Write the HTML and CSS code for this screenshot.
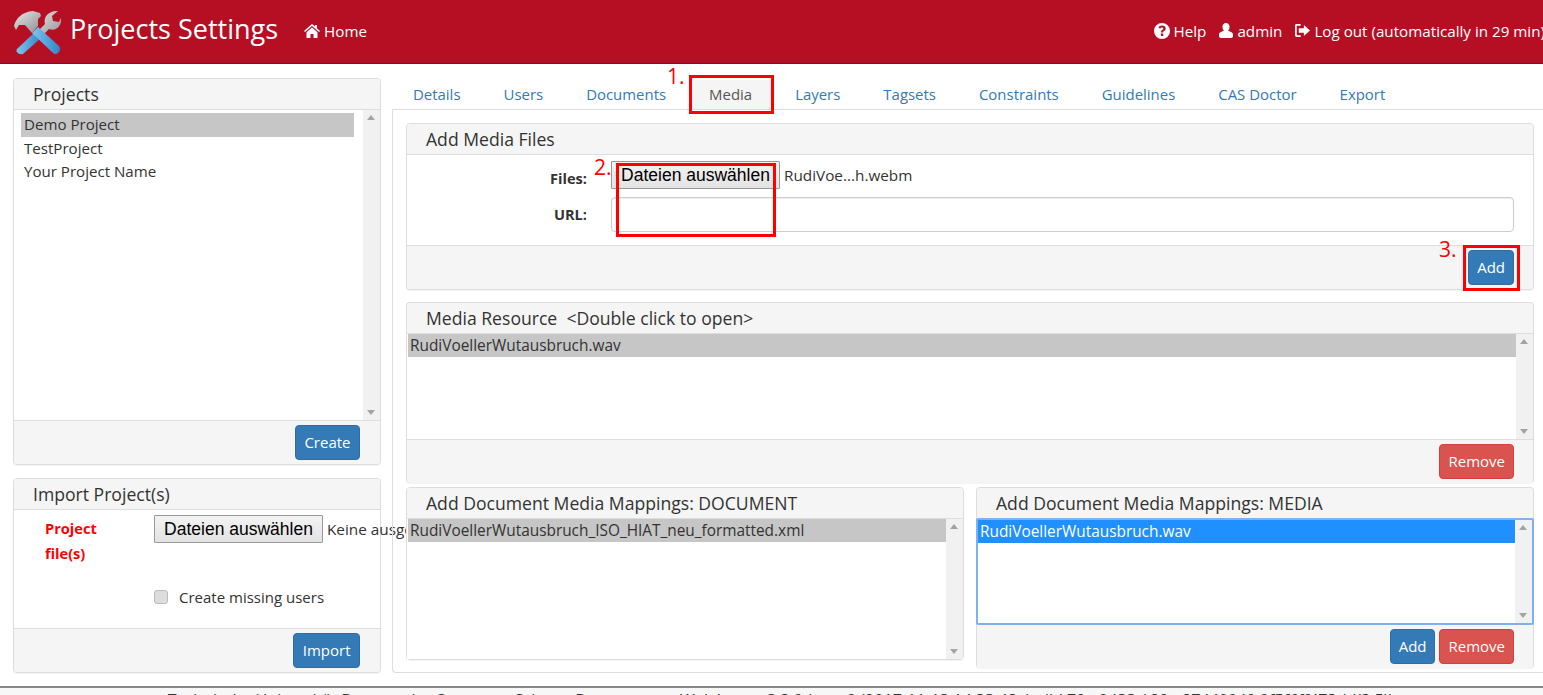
FILE: index.html
```html
<!DOCTYPE html>
<html lang="en">

<head>
    <meta charset="UTF-8">
    <meta name="viewport" content="width=device-width, initial-scale=1.0">
    <title>Projects Settings</title>
    <link rel="stylesheet" href="styles.css">
</head>

<body>
    <header class="topbar">
        <svg class="logo" viewBox="0 0 48 46" width="48" height="46">
            <defs>
                <linearGradient id="steel" x1="0" y1="0" x2="1" y2="1">
                    <stop offset="0" stop-color="#e8e8e8" />
                    <stop offset="1" stop-color="#8d8d8d" />
                </linearGradient>
                <linearGradient id="grip" x1="0" y1="0" x2="1" y2="0">
                    <stop offset="0" stop-color="#7fc4ee" />
                    <stop offset="1" stop-color="#2f86c9" />
                </linearGradient>
            </defs>
            <!-- wrench -->
            <path d="M19 27 L31 15 C29 8 35 1 44 2 L38 7 L39 12 L45 13 L47 9 C48 17 42 23 35 20 L23 32 Z" fill="url(#steel)" />
            <path d="M3 40 L21 23 L27 29 L9 45 C5 46 1 43 3 40 Z" fill="url(#grip)" />
            <!-- hammer -->
            <path d="M0 17 C2 9 8 3 19 2 L26 4 L27 7 L24 10 L24 17 L18 24 L11 16 L5 16 L2 21 Z" fill="url(#steel)" />
            <path d="M18 24 L24 18 L45 37 C47 40 46 42 44 44 C42 46 40 45 38 43 Z" fill="url(#grip)" />
        </svg>
        <span class="app-title">Projects Settings</span>
        <a class="nav-link home-link" href="#">
            <svg class="nav-icon" viewBox="0 0 16 14" width="16" height="14"><path d="M8 0 L11 2.6 V1 H13 V4.4 L16 7 L15 8 L8 2 L1 8 L0 7 Z M2.5 8.2 L8 3.5 L13.5 8.2 V14 H9.5 V10 H6.5 V14 H2.5 Z" fill="#fff" /></svg>
            Home
        </a>
        <nav class="user-nav">
            <a class="nav-link" href="#">
                <svg class="nav-icon" viewBox="0 0 16 16" width="16" height="16"><path fill-rule="evenodd" d="M8 0 A8 8 0 1 0 8 16 A8 8 0 1 0 8 0 Z M8 2.5 C10.4 2.5 11.7 3.8 11.7 5.5 C11.7 7 10.8 7.6 10 8.1 C9.4 8.5 9.2 8.8 9.2 9.6 H6.9 C6.9 8.2 7.3 7.5 8.2 6.9 C8.9 6.4 9.3 6.2 9.3 5.6 C9.3 5 8.8 4.6 8 4.6 C7.2 4.6 6.6 5 6.2 5.8 L4.4 4.6 C5.1 3.3 6.3 2.5 8 2.5 Z M6.9 10.6 H9.3 V13 H6.9 Z" fill="#fff" /></svg>
                Help
            </a>
            <a class="nav-link" href="#">
                <svg class="nav-icon" viewBox="0 0 15 16" width="14" height="15"><path d="M7.5 0 C10 0 11.3 2 11.3 4.2 C11.3 6 10.5 7.6 9.6 8.4 C11.5 9.2 15 10 15 12 V14.5 C15 15.5 14 16 13 16 H2 C1 16 0 15.5 0 14.5 V12 C0 10 3.5 9.2 5.4 8.4 C4.5 7.6 3.7 6 3.7 4.2 C3.7 2 5 0 7.5 0 Z" fill="#fff" /></svg>
                admin
            </a>
            <a class="nav-link" href="#">
                <svg class="nav-icon" viewBox="0 0 16 14" width="15" height="13"><path d="M1.5 0 H6 V1.8 H2.4 C2 1.8 1.8 2 1.8 2.4 V11.6 C1.8 12 2 12.2 2.4 12.2 H6 V14 H1.5 C0.6 14 0 13.4 0 12.5 V1.5 C0 0.6 0.6 0 1.5 0 Z M9.5 1 L16 7 L9.5 13 V9.5 H4 V4.5 H9.5 Z" fill="#fff" /></svg>
                Log out (automatically in 29 min)
            </a>
        </nav>
    </header>

    <main class="page">
        <aside class="side-col">
            <section class="panel">
                <div class="panel-heading">Projects</div>
                <div class="listbox listbox-projects">
                    <ul class="list-items">
                        <li class="selected">Demo Project</li>
                        <li>TestProject</li>
                        <li>Your Project Name</li>
                    </ul>
                    <div class="scrollbar"><span class="arrow-up"></span><span class="arrow-down"></span></div>
                </div>
                <div class="panel-footer"><button class="btn btn-primary">Create</button></div>
            </section>

            <section class="panel">
                <div class="panel-heading">Import Project(s)</div>
                <div class="import-body">
                    <label class="required-label">Project file(s)</label>
                    <div class="import-fields">
                        <div class="file-row">
                            <button class="file-btn">Dateien auswählen</button>
                            <span class="file-name file-name-clipped">Keine ausgewählt</span>
                        </div>
                        <label class="check-row"><span class="checkbox"></span>Create missing users</label>
                    </div>
                </div>
                <div class="panel-footer"><button class="btn btn-primary">Import</button></div>
            </section>
        </aside>

        <div class="content-col">
            <ul class="tabs">
                <li><a href="#">Details</a></li>
                <li><a href="#">Users</a></li>
                <li><a href="#">Documents</a></li>
                <li class="active"><a href="#">Media</a></li>
                <li><a href="#">Layers</a></li>
                <li><a href="#">Tagsets</a></li>
                <li><a href="#">Constraints</a></li>
                <li><a href="#">Guidelines</a></li>
                <li><a href="#">CAS Doctor</a></li>
                <li><a href="#">Export</a></li>
            </ul>

            <div class="tab-box">
                <section class="panel">
                    <div class="panel-heading">Add Media Files</div>
                    <div class="media-form">
                        <label class="form-label form-label-low">Files:</label>
                        <div class="file-row">
                            <button class="file-btn">Dateien auswählen</button>
                            <span class="file-name">RudiVoe...h.webm</span>
                        </div>
                        <label class="form-label">URL:</label>
                        <input class="text-input" type="text">
                    </div>
                    <div class="panel-footer"><button class="btn btn-primary">Add</button></div>
                </section>

                <section class="panel panel-open">
                    <div class="panel-heading">Media Resource &nbsp;&lt;Double click to open&gt;</div>
                    <div class="listbox listbox-media">
                        <ul class="list-items list-flush">
                            <li class="selected">RudiVoellerWutausbruch.wav</li>
                        </ul>
                        <div class="scrollbar"><span class="arrow-up"></span><span class="arrow-down"></span></div>
                    </div>
                    <div class="panel-footer"><button class="btn btn-danger">Remove</button></div>
                </section>

                <div class="mapping-row">
                    <section class="panel mapping-doc">
                        <div class="panel-heading">Add Document Media Mappings: DOCUMENT</div>
                        <div class="listbox listbox-doc">
                            <ul class="list-items list-flush">
                                <li class="selected">RudiVoellerWutausbruch_ISO_HIAT_neu_formatted.xml</li>
                            </ul>
                            <div class="scrollbar"><span class="arrow-up"></span><span class="arrow-down"></span></div>
                        </div>
                    </section>
                    <section class="panel panel-open mapping-media">
                        <div class="panel-heading">Add Document Media Mappings: MEDIA</div>
                        <div class="listbox listbox-focus">
                            <ul class="list-items list-flush">
                                <li class="selected-active">RudiVoellerWutausbruch.wav</li>
                            </ul>
                            <div class="scrollbar"><span class="arrow-up"></span><span class="arrow-down"></span></div>
                        </div>
                        <div class="panel-footer">
                            <button class="btn btn-primary">Add</button>
                            <button class="btn btn-danger">Remove</button>
                        </div>
                    </section>
                </div>
            </div>
        </div>
    </main>

    <footer class="site-footer">Technische Universität Darmstadt - Computer Science Department - WebAnno - 3.3.0-beta-2 (2017-11-13 14:33:48, build 79 - 2433 / 89 - 87440049 9f5f6ff473dd(3.5))</footer>

    <!-- red marks drawn on top of the screenshot -->
    <div class="mark mark-media"></div>
    <div class="mark mark-file"></div>
    <div class="mark mark-add"></div>
    <span class="mark-num num-1">1.</span>
    <span class="mark-num num-2">2.</span>
    <span class="mark-num num-3">3.</span>
</body>

</html>
```

FILE: styles.css
```css
/* Global styles */

html,
body {
    height: 695px;
    overflow: hidden;
}

body {
    margin: 0;
    position: relative;
    font-family: "Open Sans", Arial, sans-serif;
    font-size: 15px;
    color: #333;
    background-color: #fff;
}

ul {
    margin: 0;
    padding: 0;
    list-style: none;
}

a {
    text-decoration: none;
}
/* Top bar */

.topbar {
    display: flex;
    align-items: center;
    height: 63px;
    padding-left: 14px;
    background-color: #b60f24;
    border-bottom: 1px solid #333;
    color: #fff;
    white-space: nowrap;
    overflow: hidden;
}

.logo {
    flex: none;
    margin-right: 8px;
}

.app-title {
    font-size: 27px;
    padding-bottom: 7px;
}

.nav-link {
    display: inline-flex;
    align-items: center;
    gap: 4px;
    color: #fff;
    font-size: 15.2px;
    padding-bottom: 2px;
}

.home-link {
    margin-left: 26px;
}

.user-nav {
    display: flex;
    gap: 13px;
    margin-left: auto;
    margin-right: -2px;
}

.nav-icon {
    flex: none;
}
/* Page columns */

.page {
    display: flex;
    height: 622px;
}

.side-col {
    display: flex;
    flex-direction: column;
    gap: 13px;
    flex: none;
    width: 368px;
    margin: 14px 11px 0 13px;
}

.side-col .panel-footer {
    padding-right: 20px;
}

.side-col .btn {
    padding: 0 8.5px 2px;
}

.content-col {
    flex: 1;
    min-width: 0;
    padding-top: 16px;
}
/* Panels */

.panel {
    background-color: #fff;
    border: 1px solid #ddd;
    border-radius: 4px;
    box-shadow: 0 1px 1px rgba(0, 0, 0, .05);
}

.panel-open {
    border-bottom: none;
    background-color: #f5f5f5;
}

.panel-heading {
    height: 30px;
    line-height: 30px;
    padding-left: 19px;
    font-size: 17.6px;
    background-color: #f5f5f5;
    border-bottom: 1px solid #ddd;
    border-radius: 3px 3px 0 0;
}

.panel-footer {
    display: flex;
    justify-content: flex-end;
    gap: 4px;
    padding: 4px 19px 4px 0;
    background-color: #f5f5f5;
    border-top: 1px solid #ddd;
    border-radius: 0 0 3px 3px;
}
/* Buttons */

.btn {
    height: 35px;
    padding: 0 8px 2px;
    font-family: inherit;
    font-size: 15px;
    color: #fff;
    border: 1px solid transparent;
    border-radius: 4px;
}

.btn-primary {
    background-color: #337ab7;
    border-color: #2e6da4;
}

.btn-danger {
    background-color: #d9534f;
    border-color: #d43f3a;
}

.file-btn {
    flex: none;
    width: 169px;
    height: 28px;
    padding: 0;
    font-family: "Liberation Sans", Arial, sans-serif;
    font-size: 17.5px;
    color: #000;
    background: linear-gradient(#f3f3f3, #e3e3e3);
    border: 1px solid #999;
    border-radius: 1px;
}

.file-row {
    display: flex;
    align-items: center;
    gap: 4px;
}

.file-name {
    font-size: 15.3px;
    white-space: nowrap;
}

.file-name-clipped {
    width: 79px;
    overflow: hidden;
}
/* List boxes */

.listbox {
    display: flex;
    background-color: #fff;
}

.listbox-projects {
    height: 310px;
}

.listbox-media {
    height: 105px;
}

.listbox-doc {
    height: 140px;
}

.listbox-focus {
    height: 103px;
    margin: 0 -1px;
    border: 2px solid #7fb0f0;
    border-radius: 2px;
}

.list-items {
    flex: 1;
    min-width: 0;
    padding: 3px 9px 0 7px;
    font-size: 15.1px;
    line-height: 23.5px;
}

.list-items li {
    padding-left: 3px;
    white-space: nowrap;
}

.list-flush {
    padding: 0 0 0 1px;
    font-size: 15.4px;
    line-height: 23px;
}

.listbox-focus .list-flush {
    padding-left: 0;
}

.list-flush li {
    padding-left: 2px;
}

.selected {
    background-color: #c6c6c6;
}

.selected-active {
    background-color: #1e90ff;
    color: #fff;
}

.scrollbar {
    position: relative;
    flex: none;
    width: 17px;
    background-color: #f1f1f1;
}

.arrow-up,
.arrow-down {
    position: absolute;
    left: 4px;
    border-left: 4px solid transparent;
    border-right: 4px solid transparent;
}

.arrow-up {
    top: 5px;
    border-bottom: 5px solid #a3a3a3;
}

.arrow-down {
    bottom: 5px;
    border-top: 5px solid #a3a3a3;
}
/* Import form */

.import-body {
    display: flex;
    height: 118px;
    padding-left: 31px;
}

.required-label {
    flex: none;
    box-sizing: border-box;
    width: 109px;
    padding-right: 40px;
    margin-top: 6px;
    font-weight: bold;
    font-size: 14.6px;
    line-height: 25px;
    color: #f00;
}

.import-fields {
    padding-top: 5px;
}

.check-row {
    display: flex;
    align-items: center;
    gap: 11px;
    margin-top: 44px;
}

.checkbox {
    width: 12px;
    height: 12px;
    background-color: #ddd;
    border: 1px solid #bbb;
    border-radius: 3px;
}
/* Tabs */

.tabs {
    display: flex;
    height: 29px;
    padding-left: 1px;
    font-size: 14.95px;
    border-bottom: 1px solid #ddd;
}

.tabs li {
    margin-right: 3px;
}

.tabs a {
    display: block;
    height: 29px;
    line-height: 29px;
    padding: 0 20px;
    color: #337ab7;
}

.tabs .active a {
    color: #555;
    background-color: #f5f5f5;
}
/* Tab content */

.tab-box {
    display: flex;
    flex-direction: column;
    gap: 12px;
    height: 563px;
    padding: 13px 9px 0 13px;
    box-sizing: border-box;
    border: 1px solid #ddd;
    border-top: none;
    border-right: none;
    border-radius: 0 0 0 4px;
}

.media-form {
    display: grid;
    grid-template-columns: 180px 1fr;
    grid-template-rows: 28px 35px;
    column-gap: 24px;
    row-gap: 8px;
    align-items: center;
    height: 90px;
    padding: 6px 19px 0 0;
    box-sizing: border-box;
}

.form-label {
    text-align: right;
    font-weight: bold;
    font-size: 14.6px;
    padding-bottom: 2px;
}

.form-label-low {
    padding: 5px 0 0;
}

.text-input {
    height: 35px;
    box-sizing: border-box;
    border: 1px solid #ccc;
    border-radius: 4px;
    box-shadow: inset 0 1px 1px rgba(0, 0, 0, .075);
}

.mapping-row {
    display: flex;
    gap: 12px;
    margin-top: -8px;
    align-items: flex-start;
}

.mapping-doc,
.mapping-media {
    flex: 1;
    min-width: 0;
}

.mapping-media .panel-heading {
    border-bottom: none;
}

.mapping-media .panel-footer {
    border-top: none;
    padding-right: 19px;
}
/* Footer */

.site-footer {
    height: 7px;
    padding: 3px 0 0 18px;
    text-align: center;
    font-size: 16.1px;
    line-height: 18px;
    white-space: nowrap;
    overflow: hidden;
    background-color: #f7f7f7;
    border-top: 2px solid #888;
}
/* Red annotations */

.mark {
    position: absolute;
    box-sizing: border-box;
    border: 3px solid #f00;
}

.mark-media {
    left: 689px;
    top: 75px;
    width: 85px;
    height: 39px;
}

.mark-file {
    left: 616px;
    top: 163px;
    width: 160px;
    height: 74px;
}

.mark-add {
    left: 1463px;
    top: 245px;
    width: 57px;
    height: 46px;
}

.mark-num {
    position: absolute;
    font-size: 21px;
    line-height: 24px;
    color: #f00;
}

.num-1 {
    left: 667px;
    top: 64px;
}

.num-2 {
    left: 594px;
    top: 155px;
}

.num-3 {
    left: 1439px;
    top: 237px;
}
```
